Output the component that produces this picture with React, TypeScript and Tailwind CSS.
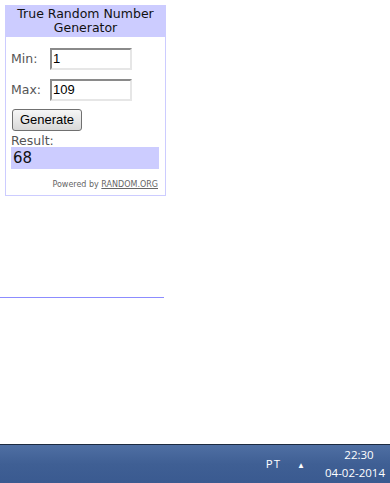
export default function App() {
  return (
    <div className="relative w-[390px] h-[483px] bg-white overflow-hidden flex flex-col">
      <div className="pt-[5px] pl-[5px]">
        <div className="w-[161px] h-[191px] border border-[#ccccff] bg-white flex flex-col" style={{ fontFamily: '"DejaVu Sans", Verdana, sans-serif' }}>
          <div className="bg-[#ccccff] h-[31px] text-center text-[12.5px] leading-[14px] text-[#111] pt-[1px]">
            True Random Number<br />Generator
          </div>
          <div className="pl-[5px] pr-[6px] pt-[11px] flex flex-col">
            <div className="flex items-center h-[22px]">
              <span className="w-[39px] text-[12.5px] text-[#555]">Min:</span>
              <div className="w-[82px] h-[22px] border-2 border-t-[#8a8a8a] border-l-[#8a8a8a] border-r-[#e6e6e6] border-b-[#e6e6e6] bg-white text-[13px] leading-[18px] pl-[1px] text-black" style={{ fontFamily: '"Liberation Sans", Arial, sans-serif' }}>1</div>
            </div>
            <div className="flex items-center h-[22px] mt-[9px]">
              <span className="w-[39px] text-[12.5px] text-[#555]">Max:</span>
              <div className="w-[82px] h-[22px] border-2 border-t-[#8a8a8a] border-l-[#8a8a8a] border-r-[#e6e6e6] border-b-[#e6e6e6] bg-white text-[13px] leading-[18px] pl-[1px] text-black" style={{ fontFamily: '"Liberation Sans", Arial, sans-serif' }}>109</div>
            </div>
            <div className="mt-[8px] ml-[1px] w-[70px] h-[22px] border border-[#707070] rounded-[3px] bg-gradient-to-b from-[#f6f6f6] via-[#e8e8e8] to-[#d8d8d8] text-[13px] leading-[20px] text-center text-black" style={{ fontFamily: '"Liberation Sans", Arial, sans-serif' }}>
              Generate
            </div>
            <div className="mt-[3px] text-[12.5px] leading-[13px] text-[#555]">Result:</div>
            <div className="bg-[#ccccff] h-[22px] w-[148px] text-[15px] leading-[22px] pl-[2px] text-[#111]">68</div>
            <div className="mt-[10px] text-right text-[8px] text-[#666] pr-[1px]">
              Powered by <span className="underline">RANDOM.ORG</span>
            </div>
          </div>
        </div>
      </div>
      <div className="mt-[101px] w-[164px] h-[1px] bg-[#8c8cff]" />
      <div className="flex-1" />
      <div className="h-[39px] border-t border-[#1c2a40] bg-gradient-to-b from-[#4f6fa3] via-[#3f5f94] to-[#3a5a90] flex items-center text-white text-[11.5px]" style={{ fontFamily: '"Open Sans", "Segoe UI", sans-serif' }}>
        <div className="flex-1" />
        <span className="mr-[16px] tracking-[1px]">PT</span>
        <span className="mr-[20px] text-[8px] mt-[2px]">▲</span>
        <div className="flex flex-col items-center mr-[5px] leading-[18px]">
          <span className="pl-[8px]">22:30</span>
          <span>04-02-2014</span>
        </div>
      </div>
    </div>
  )
}
